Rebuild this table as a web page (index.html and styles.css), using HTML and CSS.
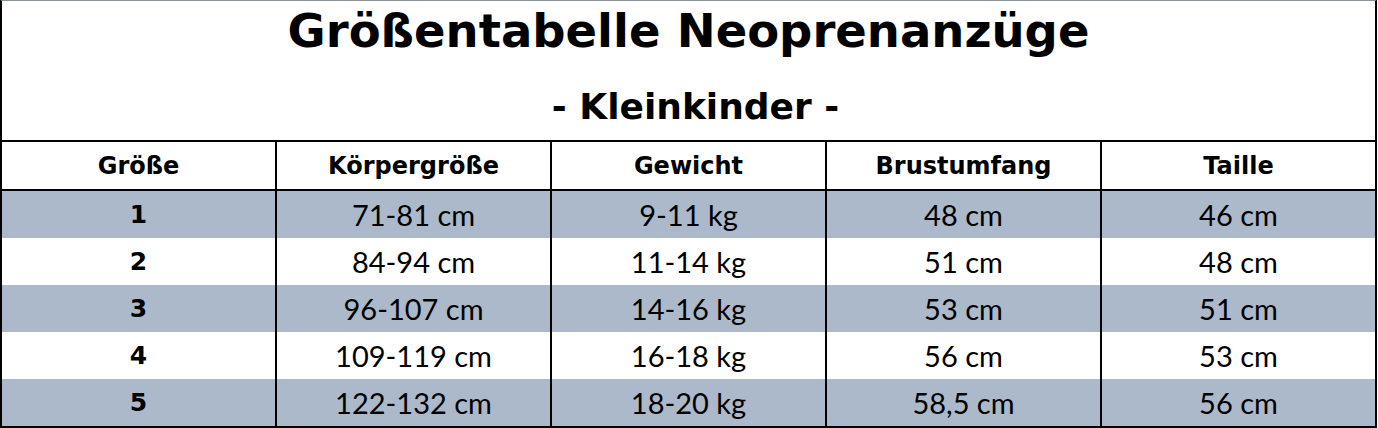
FILE: index.html
```html
<!DOCTYPE html>
<html lang="de">
<head>
<meta charset="utf-8">
<title>Größentabelle Neoprenanzüge</title>
<link rel="stylesheet" href="styles.css">
</head>
<body>
<div class="sheet">
  <div class="title-block">
    <div class="title">Größentabelle Neoprenanzüge</div>
    <div class="subtitle">- Kleinkinder -</div>
  </div>
  <div class="grid">
    <div class="cell head">Größe</div>
    <div class="cell head">Körpergröße</div>
    <div class="cell head">Gewicht</div>
    <div class="cell head">Brustumfang</div>
    <div class="cell head">Taille</div>

    <div class="cell odd num">1</div>
    <div class="cell odd">71-81 cm</div>
    <div class="cell odd">9-11 kg</div>
    <div class="cell odd">48 cm</div>
    <div class="cell odd">46 cm</div>

    <div class="cell num">2</div>
    <div class="cell">84-94 cm</div>
    <div class="cell">11-14 kg</div>
    <div class="cell">51 cm</div>
    <div class="cell">48 cm</div>

    <div class="cell odd num">3</div>
    <div class="cell odd">96-107 cm</div>
    <div class="cell odd">14-16 kg</div>
    <div class="cell odd">53 cm</div>
    <div class="cell odd">51 cm</div>

    <div class="cell num">4</div>
    <div class="cell">109-119 cm</div>
    <div class="cell">16-18 kg</div>
    <div class="cell">56 cm</div>
    <div class="cell">53 cm</div>

    <div class="cell odd num">5</div>
    <div class="cell odd">122-132 cm</div>
    <div class="cell odd">18-20 kg</div>
    <div class="cell odd">58,5 cm</div>
    <div class="cell odd">56 cm</div>
  </div>
</div>
</body>
</html>
```

FILE: styles.css
```css
html, body {
  margin: 0;
  padding: 0;
  background: #ffffff;
}
body {
  font-family: "Lato", "Open Sans", "Liberation Sans", sans-serif;
  color: #000000;
}
.sheet {
  width: 1377px;
  box-sizing: border-box;
  border-top: 1px solid #8a939d;
  border-left: 2px solid #000;
  border-right: 2px solid #000;
  border-bottom: 2px solid #000;
}
.title-block {
  height: 139px;
  border-bottom: 2px solid #000;
  display: flex;
  flex-direction: column;
  align-items: center;
}
.title {
  font-family: "DejaVu Sans", "Liberation Sans", sans-serif;
  font-weight: 700;
  font-size: 46.5px;
  line-height: 60px;
}
.subtitle {
  font-family: "DejaVu Sans", "Liberation Sans", sans-serif;
  font-weight: 700;
  font-size: 36px;
  line-height: 48px;
  margin-top: 22px;
  margin-left: 14px;
}
.grid {
  display: grid;
  grid-template-columns: repeat(4, 275px) 273px;
  grid-template-rows: 49px repeat(5, 47px);
}
.cell {
  box-sizing: border-box;
  display: flex;
  align-items: center;
  justify-content: center;
  font-size: 29px;
  border-right: 2px solid #000;
}
.cell:nth-child(5n) {
  border-right: none;
}
.head {
  font-family: "DejaVu Sans", "Liberation Sans", sans-serif;
  font-weight: 700;
  font-size: 24px;
  border-bottom: 2px solid #000;
}
.num {
  font-family: "DejaVu Sans", "Liberation Sans", sans-serif;
  font-weight: 700;
  font-size: 25px;
}
.odd {
  background: #acb9ca;
}
```
